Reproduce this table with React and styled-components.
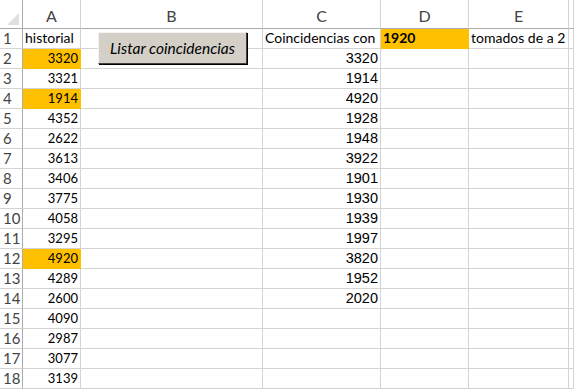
import { Fragment } from "react";
import styled, { createGlobalStyle } from "styled-components";

const Global = createGlobalStyle`
  html, body { margin: 0; padding: 0; background: #fff; }
  body { overflow: hidden; }
`;

const colA = [3320, 3321, 1914, 4352, 2622, 3613, 3406, 3775, 4058, 3295, 4920, 4289, 2600, 4090, 2987, 3077, 3139];
const colC = [3320, 1914, 4920, 1928, 1948, 3922, 1901, 1930, 1939, 1997, 3820, 1952, 2020];
const marked = [2, 4, 12];

const GOLD = "#ffc000";
const GRID = "#d4d4d4";

const Wrap = styled.div`
  position: relative;
  width: 574px;
  height: 389px;
  overflow: hidden;
`;

const Sheet = styled.div`
  display: grid;
  grid-template-columns: 23px 58px 182px 118px 88px 100px 1fr;
  grid-template-rows: 29px;
  grid-auto-rows: 20px;
`;

const Corner = styled.div`
  border-right: 1px solid #ababab;
  border-bottom: 1px solid #ababab;
  box-sizing: border-box;
  display: flex;
  align-items: flex-end;
  justify-content: flex-end;
  padding: 0 3px 3px 0;
`;

const ColHead = styled.div`
  box-sizing: border-box;
  border-bottom: 1px solid #ababab;
  border-right: 1px solid ${GRID};
  display: flex;
  align-items: flex-end;
  justify-content: center;
  padding-bottom: 3px;
  font-family: Lato, "Liberation Sans", sans-serif;
  font-size: 16px;
  line-height: 18px;
  color: #444;
`;

const RowHead = styled.div`
  box-sizing: border-box;
  border-right: 1px solid #ababab;
  border-bottom: 1px solid ${GRID};
  display: flex;
  align-items: flex-end;
  padding: 0 0 1px 3px;
  font-family: Lato, "Liberation Sans", sans-serif;
  font-size: 15px;
  line-height: 18px;
  color: #444;
`;

const Cell = styled.div`
  box-sizing: border-box;
  border-right: 1px solid ${(p) => p.$bg || GRID};
  border-bottom: 1px solid ${(p) => p.$bg || GRID};
  background: ${(p) => p.$bg || "transparent"};
  display: flex;
  align-items: flex-end;
  justify-content: ${(p) => (p.$right ? "flex-end" : "flex-start")};
  padding: 0 2px 2px 2px;
  white-space: nowrap;
  font-family: ${(p) => (p.$arial ? '"Liberation Sans", Arial, sans-serif' : 'Lato, "Liberation Sans", sans-serif')};
  font-size: ${(p) => p.$size || 14}px;
  font-weight: ${(p) => (p.$bold ? 700 : 400)};
  line-height: 16px;
  color: #000;
`;

const Macro = styled.button`
  position: absolute;
  left: 98px;
  top: 32px;
  width: 149px;
  height: 32px;
  box-sizing: border-box;
  background: #d4d0c8;
  border: 1px solid;
  border-color: #f4f4f4 #404040 #404040 #f4f4f4;
  box-shadow: 1px 1px 0 #000;
  font-family: Lato, "Liberation Sans", sans-serif;
  font-style: italic;
  font-size: 15.5px;
  color: #000;
  padding: 0;
  cursor: default;
`;

function App() {
  const rows = [];
  for (let r = 1; r <= 18; r++) {
    const hi = marked.includes(r);
    rows.push(
      <Fragment key={r}>
        <RowHead>{r}</RowHead>
        {r === 1 ? (
          <>
            <Cell>historial</Cell>
            <Cell />
            <Cell>Coincidencias con</Cell>
            <Cell $bg={GOLD} $bold>1920</Cell>
            <Cell>tomados de a 2</Cell>
          </>
        ) : (
          <>
            <Cell $right $size={13} $bg={hi ? GOLD : undefined}>
              {colA[r - 2]}
            </Cell>
            <Cell />
            <Cell $right $arial $size={14.5}>
              {colC[r - 2]}
            </Cell>
            <Cell />
            <Cell />
          </>
        )}
        <Cell />
      </Fragment>
    );
  }

  return (
    <Wrap>
      <Global />
      <Sheet>
        <Corner>
          <svg width="12" height="12" viewBox="0 0 12 12">
            <polygon points="12,0 12,12 0,12" fill="#dfdfdf" />
          </svg>
        </Corner>
        {["A", "B", "C", "D", "E", ""].map((l, i) => (
          <ColHead key={i}>{l}</ColHead>
        ))}
        {rows}
      </Sheet>
      <Macro>Listar coincidencias</Macro>
    </Wrap>
  );
}

export default App;
